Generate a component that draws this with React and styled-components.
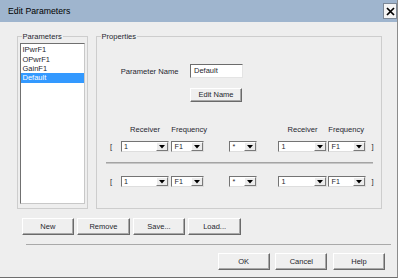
import React from "react";
import styled, { createGlobalStyle } from "styled-components";

const GlobalStyle = createGlobalStyle`
  body {
    margin: 0;
    background: #ffffff;
    font-family: "Liberation Sans", Arial, sans-serif;
    color: #1f1f2e;
  }
  * { box-sizing: border-box; }
`;

// column tracks shared by the header and the two receiver rows
const columns =
  "[lb] 14.7px [rec1] 48.6px 2px [f1] 33px 25px [op] 27.4px 21.6px [rec2] 48.4px 1.6px [f2] 37.4px [rb] 8px";

const Window = styled.div`
  width: 398px;
  height: 278px;
  display: flex;
  flex-direction: column;
  background: #eeeeee;
  border-right: 1px solid #8c8c8c;
  border-bottom: 1px solid #6e6e6e;
`;

const TitleBar = styled.div`
  height: 22px;
  flex: none;
  display: flex;
  align-items: center;
  justify-content: space-between;
  padding-left: 8px;
  background: #9fb5ce;
  color: #000;
  font-size: 8.7px;
`;

const CloseButton = styled.button`
  width: 14px;
  height: 16px;
  padding: 0;
  display: flex;
  align-items: center;
  justify-content: center;
  background: #f5f5f5;
  border: 1px solid #7c8896;
`;

const Body = styled.div`
  flex: 1;
  display: flex;
  flex-direction: column;
  padding-top: 9.5px;
`;

const Groups = styled.div`
  display: flex;
  gap: 8px;
  height: 177.5px;
  padding: 0 15px 0 17px;
`;

const Group = styled.fieldset`
  margin: 0;
  padding: 0;
  min-width: 0;
  width: ${(p) => (p.$w ? `${p.$w}px` : "auto")};
  flex: ${(p) => (p.$w ? "none" : "1")};
  display: flex;
  flex-direction: column;
  border: 1px solid #cdcdcd;
`;

const Legend = styled.legend`
  margin-left: 3.5px;
  padding: 0 1px;
  font-size: 7.6px;
  line-height: 9px;
`;

const ListBox = styled.div`
  flex: 1;
  margin: 2.8px 2px 4px 2px;
  padding-top: 1px;
  background: #fff;
  border: 1px solid;
  border-color: #707070 #c8c8c8 #c8c8c8 #707070;
`;

const ListItem = styled.div`
  height: 9.4px;
  line-height: 9.4px;
  padding-left: 1.5px;
  font-size: 7.5px;
  color: ${(p) => (p.$selected ? "#fff" : "#1f1f2e")};
  background: ${(p) => (p.$selected ? "#3399ff" : "transparent")};
`;

const NameGrid = styled.div`
  display: grid;
  grid-template-columns: 69.3px 53px;
  row-gap: 10px;
  align-items: center;
  margin: 23.5px 0 0 23.7px;
`;

const Label = styled.span`
  font-size: 7.6px;
  line-height: 9px;
  white-space: nowrap;
`;

const TextField = styled.div`
  height: 14.3px;
  padding: 1px 3px;
  font-size: 7.5px;
  line-height: 9px;
  background: #fff;
  border: 1px solid;
  border-color: #6c6c6c #e4e4e4 #e4e4e4 #6c6c6c;
`;

const Button = styled.button`
  width: ${(p) => p.$w}px;
  height: ${(p) => p.$h}px;
  padding: 0;
  font-family: inherit;
  font-size: 7.5px;
  color: #1f1f2e;
  background: #efefef;
  border: 1px solid;
  border-color: #ffffff #6a6a6a #6a6a6a #ffffff;
  box-shadow: inset -1px -1px 0 #a8a8a8;
`;

const ComboArea = styled.div`
  margin-left: 9px;
`;

const Line = styled.div`
  display: grid;
  grid-template-columns: ${columns};
  align-items: center;
  height: ${(p) => p.$h}px;
  margin-top: ${(p) => p.$mt}px;
`;

const Cell = styled.span`
  grid-column: ${(p) => p.$col};
  justify-self: ${(p) => p.$justify || "start"};
  padding-left: ${(p) => p.$pl || 0}px;
  font-size: 7.6px;
  line-height: 9px;
  white-space: nowrap;
`;

const Combo = styled.div`
  grid-column: ${(p) => p.$col};
  height: 11px;
  display: flex;
  align-items: center;
  padding-left: 2.3px;
  font-size: 7.2px;
  background: #fff;
  border: 1px solid;
  border-color: #747474 #dedede #dedede #747474;
`;

const DropButton = styled.span`
  margin-left: auto;
  width: 12px;
  height: 9px;
  display: flex;
  align-items: center;
  justify-content: center;
  background: #ececec;
  border: 1px solid;
  border-color: #ffffff #7a7a7a #7a7a7a #ffffff;
`;

const Rule = styled.div`
  width: 267.3px;
  height: 2px;
  margin-top: 10.1px;
  border-top: 1px solid #a4a4a4;
  border-bottom: 1px solid #c6c6c6;
`;

const ButtonRow = styled.div`
  display: flex;
  gap: 3.3px;
  margin-top: 9.3px;
  padding-left: 21.7px;
`;

const Divider = styled.div`
  height: 1px;
  margin: 8.7px 6px 0 26px;
  background: #a9a9a9;
`;

const Footer = styled.div`
  display: flex;
  justify-content: flex-end;
  gap: 5.7px;
  margin-top: 8.3px;
  padding-right: 12px;
`;

const Arrow = () => (
  <svg width="6" height="4" viewBox="0 0 6 4">
    <path d="M0 0H6L3 3.5Z" fill="#000" />
  </svg>
);

const Select = ({ col, value }) => (
  <Combo $col={col}>
    {value}
    <DropButton>
      <Arrow />
    </DropButton>
  </Combo>
);

const ReceiverRow = ({ mt }) => (
  <Line $h={11} $mt={mt}>
    <Cell $col="lb" $pl={4}>[</Cell>
    <Select col="rec1" value="1" />
    <Select col="f1" value="F1" />
    <Select col="op" value="*" />
    <Select col="rec2" value="1" />
    <Select col="f2" value="F1" />
    <Cell $col="rb" $justify="end">]</Cell>
  </Line>
);

const params = ["IPwrF1", "OPwrF1", "GainF1", "Default"];

export default function App() {
  return (
    <>
      <GlobalStyle />
      <Window>
        <TitleBar>
          <span>Edit Parameters</span>
          <CloseButton aria-label="Close">
            <svg width="9" height="9" viewBox="0 0 9 9">
              <path d="M1 1L8 8M8 1L1 8" stroke="#000" strokeWidth="1.7" />
            </svg>
          </CloseButton>
        </TitleBar>
        <Body>
          <Groups>
            <Group $w={71}>
              <Legend>Parameters</Legend>
              <ListBox>
                {params.map((name) => (
                  <ListItem key={name} $selected={name === "Default"}>
                    {name}
                  </ListItem>
                ))}
              </ListBox>
            </Group>
            <Group>
              <Legend>Properties</Legend>
              <NameGrid>
                <Label>Parameter Name</Label>
                <TextField>Default</TextField>
                <span />
                <Button $w={52} $h={13.4}>Edit Name</Button>
              </NameGrid>
              <ComboArea>
                <Line $h={9} $mt={23.1}>
                  <Cell $col="rec1" $justify="center">Receiver</Cell>
                  <Cell $col="f1">Frequency</Cell>
                  <Cell $col="rec2" $justify="center">Receiver</Cell>
                  <Cell $col="f2">Frequency</Cell>
                </Line>
                <ReceiverRow mt={7.4} />
                <Rule />
                <ReceiverRow mt={11.9} />
              </ComboArea>
            </Group>
          </Groups>
          <ButtonRow>
            <Button $w={52.3} $h={17}>New</Button>
            <Button $w={52.3} $h={17}>Remove</Button>
            <Button $w={52.3} $h={17}>Save...</Button>
            <Button $w={52.3} $h={17}>Load...</Button>
          </ButtonRow>
          <Divider />
          <Footer>
            <Button $w={52} $h={16.7}>OK</Button>
            <Button $w={52} $h={16.7}>Cancel</Button>
            <Button $w={52} $h={16.7}>Help</Button>
          </Footer>
        </Body>
      </Window>
    </>
  );
}
